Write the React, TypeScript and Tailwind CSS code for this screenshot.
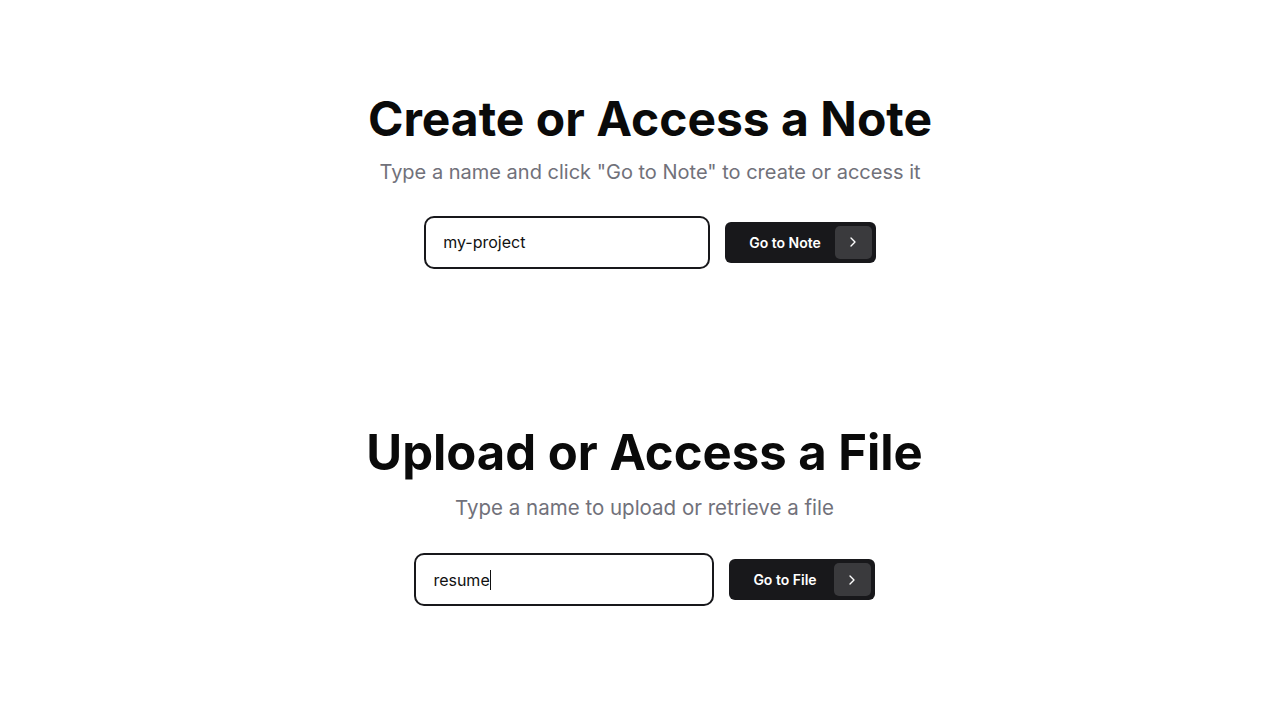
import React from 'react';

const Chevron = () => (
  <svg viewBox="0 0 24 24" className="w-4 h-4" fill="none" stroke="currentColor" strokeWidth={2} strokeLinecap="round" strokeLinejoin="round">
    <path d="m9 18 6-6-6-6" />
  </svg>
);

type SectionProps = {
  title: string;
  subtitle: string;
  value: string;
  button: string;
  titleSize: string;
  subSize: string;
  subGap: string;
  rowGap: string;
  inputWidth: string;
  boxGap: string;
  offset: string;
  caret?: boolean;
};

const Section = ({ title, subtitle, value, button, titleSize, subSize, subGap, rowGap, inputWidth, boxGap, offset, caret }: SectionProps) => (
  <section className={`flex flex-col items-center ${offset}`}>
    <h1 className={`${titleSize} leading-[1.2] font-bold text-[#0a0a0a]`}>{title}</h1>
    <p className={`${subGap} ${subSize} leading-7 text-[#71717a]`}>{subtitle}</p>
    <div className={`${rowGap} flex items-center gap-[15px]`}>
      <div className={`${inputWidth} h-[53px] rounded-[10px] border-2 border-[#18181b] bg-white flex items-center px-[17px] text-[16px] text-[#111111]`}>
        <span>{value}</span>
        {caret && <span className="w-px h-[20px] bg-[#111111]" />}
      </div>
      <button className="h-[41px] flex items-center rounded-[6px] bg-[#18181b] pl-6 pr-1 text-[14px] font-semibold text-white">
        <span>{button}</span>
        <span className={`${boxGap} w-[37px] h-[33px] rounded-[5px] bg-[#3a3a3d] flex items-center justify-center`}>
          <Chevron />
        </span>
      </button>
    </div>
  </section>
);

export default function App() {
  return (
    <div className="min-h-screen bg-white flex flex-col pt-[90px] gap-[155px]" style={{ fontFamily: 'Inter, "Noto Sans", sans-serif' }}>
      <Section
        title="Create or Access a Note"
        subtitle={'Type a name and click "Go to Note" to create or access it'}
        value="my-project"
        button="Go to Note"
        titleSize="text-[48px]"
        subSize="text-[20px]"
        subGap="mt-[10px]"
        rowGap="mt-[30px]"
        inputWidth="w-[286px]"
        boxGap="ml-[14px]"
        offset="pl-[20px]"
      />
      <Section
        title="Upload or Access a File"
        subtitle="Type a name to upload or retrieve a file"
        value="resume"
        button="Go to File"
        titleSize="text-[49px]"
        subSize="text-[20.5px]"
        subGap="mt-[12px]"
        rowGap="mt-[31px]"
        inputWidth="w-[300px]"
        boxGap="ml-[17px]"
        offset="pl-[9px]"
        caret
      />
    </div>
  );
}
